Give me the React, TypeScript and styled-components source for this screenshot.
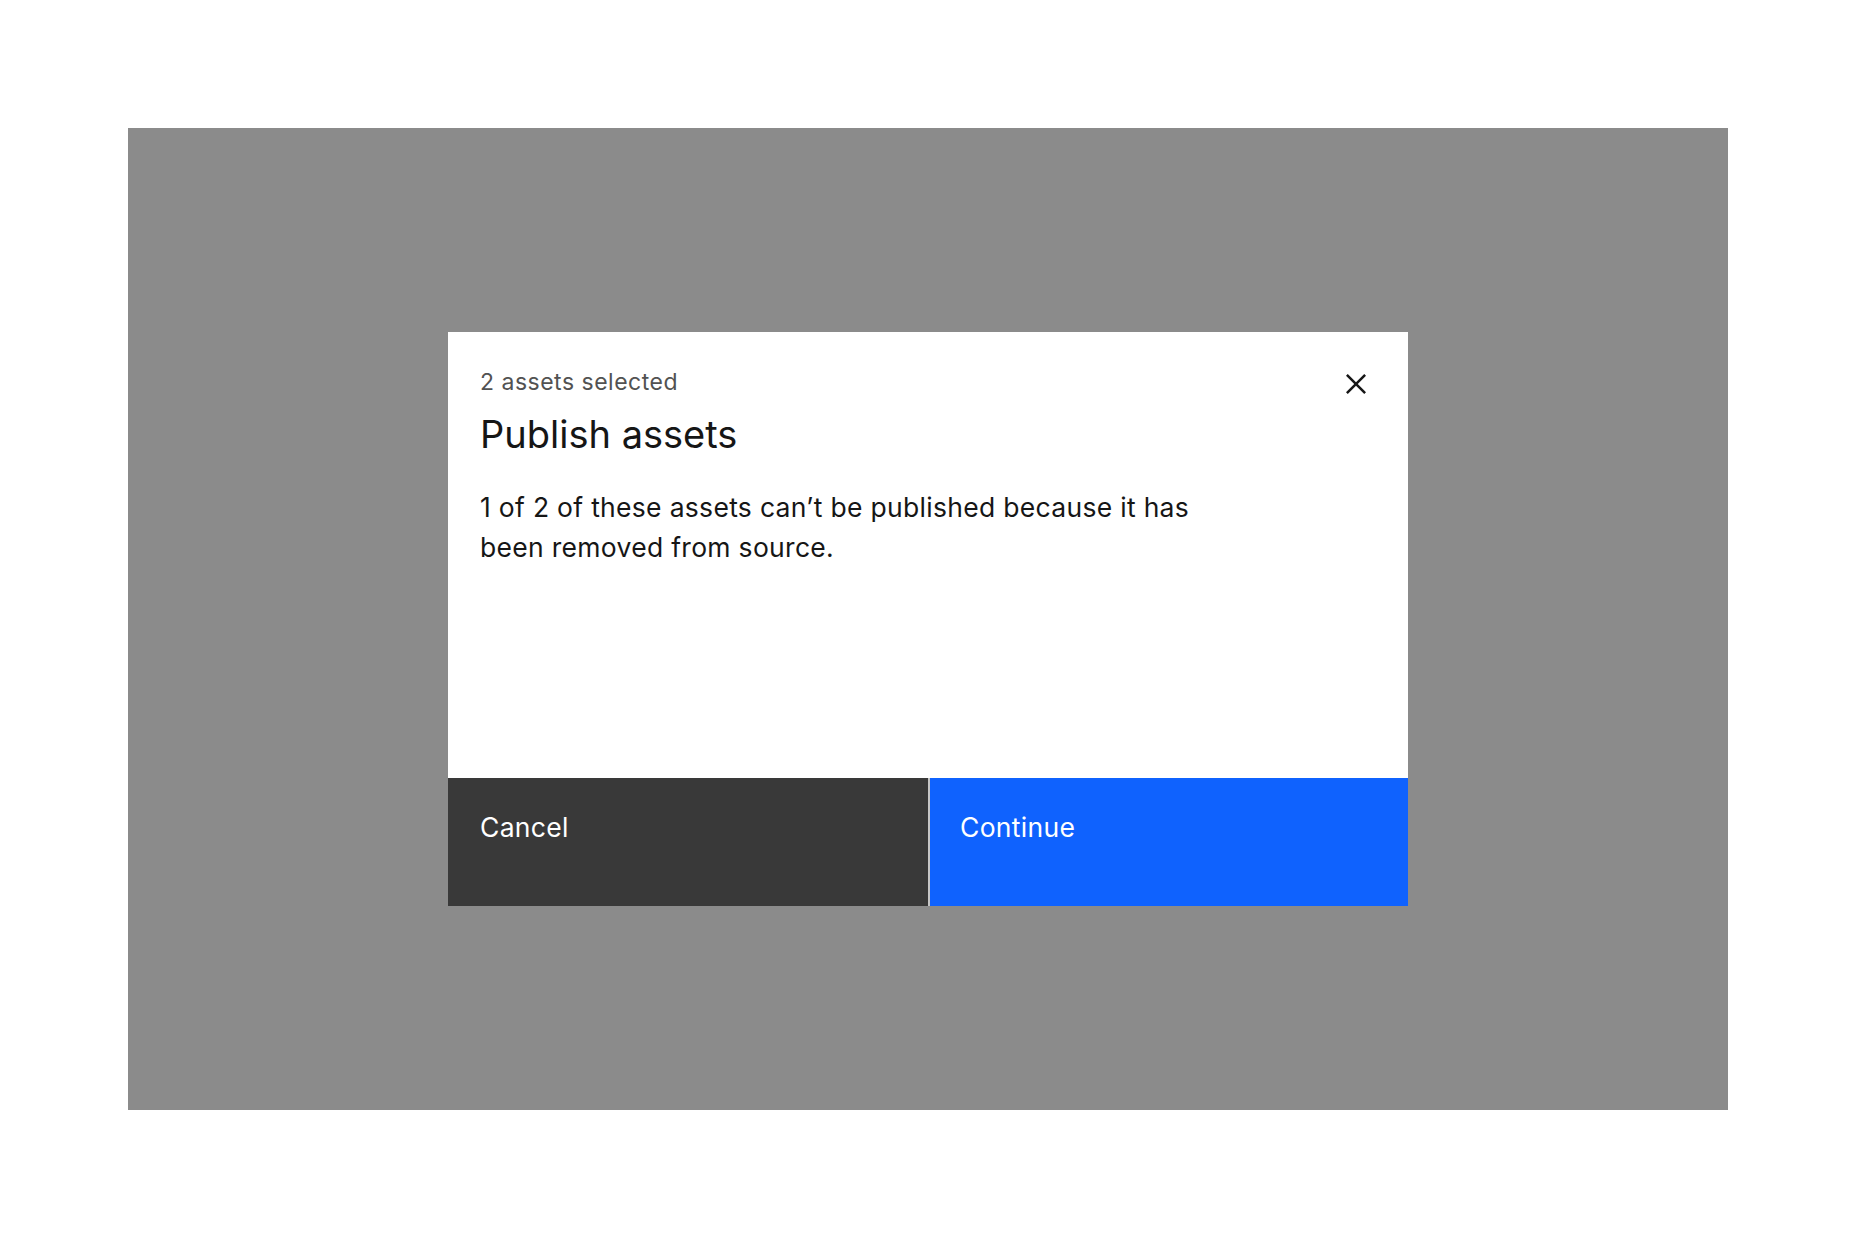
import styled, { createGlobalStyle } from 'styled-components';

const GlobalStyle = createGlobalStyle`
  html, body {
    margin: 0;
    padding: 0;
    background: #ffffff;
  }
  body {
    font-family: Inter, "Noto Sans", "Liberation Sans", sans-serif;
    -webkit-font-smoothing: antialiased;
  }
`;

const Page = styled.div`
  width: 1856px;
  height: 1238px;
  padding: 128px;
  box-sizing: border-box;
  background: #ffffff;
`;

const Overlay = styled.div`
  height: 982px;
  background: #8b8b8b;
  display: flex;
  align-items: center;
  justify-content: center;
`;

const Modal = styled.div`
  width: 960px;
  height: 574px;
  background: #ffffff;
  display: flex;
  flex-direction: column;
`;

const Header = styled.div`
  display: flex;
  justify-content: space-between;
  align-items: flex-start;
  padding: 34px 32px 0 32px;
`;

const Titles = styled.div`
  display: flex;
  flex-direction: column;
  gap: 8px;
`;

const Label = styled.div`
  font-size: 23px;
  line-height: 32px;
  letter-spacing: 0.5px;
  color: #525252;
`;

const Title = styled.h2`
  margin: 0;
  font-size: 38px;
  font-weight: 400;
  line-height: 56px;
  letter-spacing: 0;
  color: #161616;
`;

const CloseButton = styled.button`
  width: 40px;
  height: 40px;
  margin-top: -2px;
  padding: 0;
  border: none;
  background: transparent;
  display: flex;
  align-items: center;
  justify-content: center;
  cursor: pointer;
`;

const Body = styled.div`
  flex: 1;
  padding: 25px 20% 0 32px;
  font-size: 26.5px;
  line-height: 40px;
  letter-spacing: 0.3px;
  color: #161616;
`;

const Footer = styled.div`
  height: 128px;
  display: grid;
  grid-template-columns: 480px 1fr;
  column-gap: 2px;
  background: #c6c6c6;
`;

const Action = styled.button<{ $primary?: boolean }>`
  border: none;
  margin: 0;
  text-align: left;
  display: flex;
  align-items: flex-start;
  padding: 31px ${(p) => (p.$primary ? '30px' : '32px')};
  background: ${(p) => (p.$primary ? '#0f62fe' : '#393939')};
  color: #ffffff;
  font-family: inherit;
  font-size: 26.5px;
  line-height: 36px;
  letter-spacing: 0.3px;
  cursor: pointer;
`;

const CloseIcon = () => (
  <svg width="40" height="40" viewBox="0 0 32 32" fill="#161616">
    <polygon points="17.4141 16 24 9.4141 22.5859 8 16 14.5859 9.4143 8 8 9.4141 14.5859 16 8 22.5859 9.4143 24 16 17.4141 22.5859 24 24 22.5859 17.4141 16" />
  </svg>
);

export default function App() {
  return (
    <>
      <GlobalStyle />
      <Page>
        <Overlay>
          <Modal>
            {/* 标题 */}
            <Header>
              <Titles>
                <Label>2 assets selected</Label>
                <Title>Publish assets</Title>
              </Titles>
              <CloseButton aria-label="Close">
                <CloseIcon />
              </CloseButton>
            </Header>

            <Body>
              1 of 2 of these assets can’t be published because it has been removed from source.
            </Body>

            {/* 按钮 */}
            <Footer>
              <Action>Cancel</Action>
              <Action $primary>Continue</Action>
            </Footer>
          </Modal>
        </Overlay>
      </Page>
    </>
  );
}
